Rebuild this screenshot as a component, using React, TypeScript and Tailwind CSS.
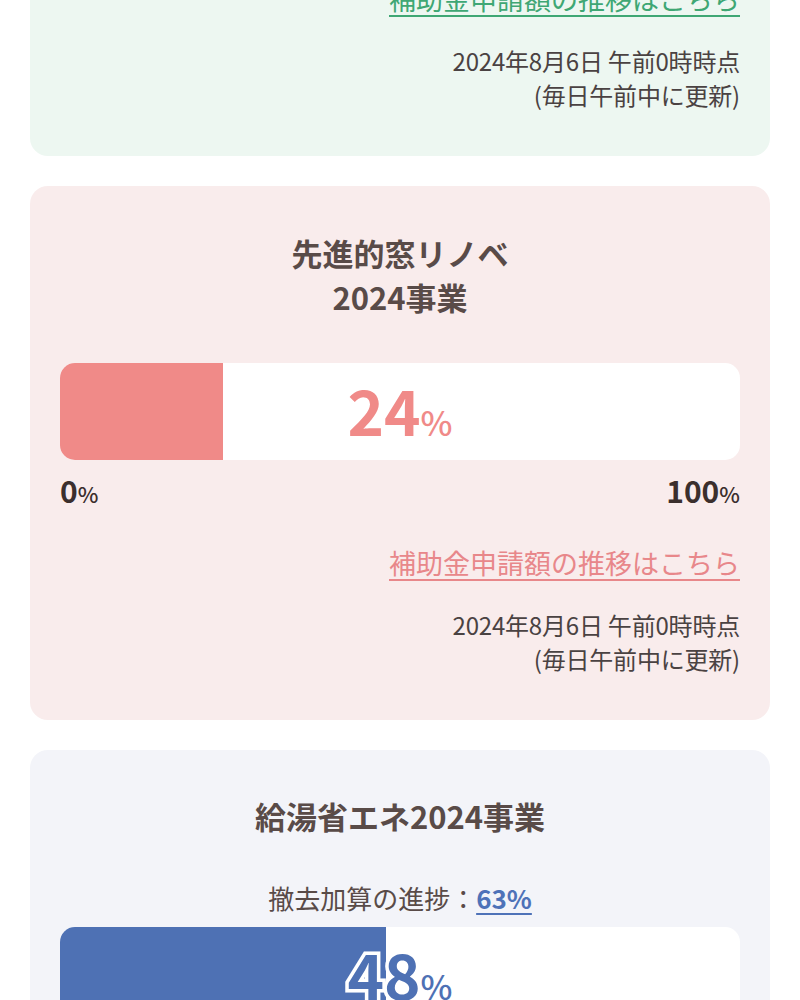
import React from "react";

type Theme = {
  card: string;
  fill: string;
  text: string;
  link: string;
};

const themes: Record<string, Theme> = {
  green: {
    card: "bg-[#edf7f1]",
    fill: "bg-[#4fb07f]",
    text: "text-[#4fb07f]",
    link: "text-[#3fa774] decoration-[#3fa774]",
  },
  pink: {
    card: "bg-[#f9ecec]",
    fill: "bg-[#f08a88]",
    text: "text-[#f08a88]",
    link: "text-[#e8878a] decoration-[#e8878a]",
  },
  blue: {
    card: "bg-[#f3f4f9]",
    fill: "bg-[#4e71b4]",
    text: "text-[#4e71b4]",
    link: "text-[#4e71b4] decoration-[#4e71b4]",
  },
};

const ProgressBar: React.FC<{ percent: number; theme: Theme; outlined?: boolean }> = ({
  percent,
  theme,
  outlined,
}) => (
  <div className="relative h-[97px] w-full overflow-hidden rounded-[15px] bg-white">
    <div className={`h-full ${theme.fill}`} style={{ width: `${percent}%` }} />
    <div className="absolute inset-0 flex items-center justify-center pb-[5px]">
      <div
        className={`flex items-baseline font-bold ${theme.text} ${
          outlined ? "[paint-order:stroke_fill] [-webkit-text-stroke:7px_white]" : ""
        }`}
      >
        <span className="text-[62px] leading-none">{percent}</span>
        <span className="text-[34px] leading-none font-medium">%</span>
      </div>
    </div>
  </div>
);

const Scale: React.FC = () => (
  <div className="mt-[12px] flex h-[36px] items-baseline justify-between overflow-hidden text-[#3b2f2d]">
    <div className="flex items-baseline leading-[36px]">
      <span className="text-[30px] font-bold">0</span>
      <span className="text-[22px] font-medium">%</span>
    </div>
    <div className="flex items-baseline leading-[36px]">
      <span className="text-[30px] font-bold">100</span>
      <span className="text-[22px] font-medium">%</span>
    </div>
  </div>
);

const Footer: React.FC<{ theme: Theme }> = ({ theme }) => (
  <div className="flex flex-col items-end">
    <a
      href="#"
      className={`mt-[35px] text-[27px] leading-[40px] underline decoration-[2px] underline-offset-[5px] ${theme.link}`}
    >
      補助金申請額の推移はこちら
    </a>
    <div className="mt-[25px] text-right text-[24px] leading-[34px] tracking-[-0.2px] text-[#4a4242]">
      <p>2024年8月6日 午前0時時点</p>
      <p>(毎日午前中に更新)</p>
    </div>
  </div>
);

const Card: React.FC<{
  title: React.ReactNode;
  percent: number;
  themeKey: string;
}> = ({ title, percent, themeKey }) => {
  const theme = themes[themeKey];
  return (
    <section className={`rounded-[18px] px-[30px] pt-[45px] pb-[44px] ${theme.card}`}>
      <h2 className="text-center text-[31px] leading-[44px] font-bold text-[#594b48]">{title}</h2>
      <div className="mt-[44px]">
        <ProgressBar percent={percent} theme={theme} />
      </div>
      <Scale />
      <Footer theme={theme} />
    </section>
  );
};

export default function App() {
  return (
    <div
      className="min-h-screen overflow-hidden bg-white"
      style={{ fontFamily: '"Noto Sans CJK JP", "Noto Sans", sans-serif' }}
    >
      <div className="-mt-[378px] flex flex-col gap-[30px] px-[30px]">
        <Card
          themeKey="green"
          percent={61}
          title={
            <>
              子育てエコホーム
              <br />
              支援事業
            </>
          }
        />
        <Card
          themeKey="pink"
          percent={24}
          title={
            <>
              先進的窓リノベ
              <br />
              2024事業
            </>
          }
        />
        <section className="rounded-[18px] bg-[#f3f4f9] px-[30px] pt-[44px] pb-[44px]">
          <h2 className="text-center text-[31px] leading-[44px] font-bold text-[#594b48]">
            給湯省エネ2024事業
          </h2>
          <p className="mt-[40px] text-center text-[26px] leading-[40px] text-[#594b48]">
            撤去加算の進捗：
            <a
              href="#"
              className="font-bold text-[#4e72b8] underline decoration-[2px] underline-offset-[4px]"
            >
              63%
            </a>
          </p>
          <div className="mt-[9px]">
            <ProgressBar percent={48} theme={themes.blue} outlined />
          </div>
          <Scale />
          <Footer theme={themes.blue} />
        </section>
      </div>
    </div>
  );
}
